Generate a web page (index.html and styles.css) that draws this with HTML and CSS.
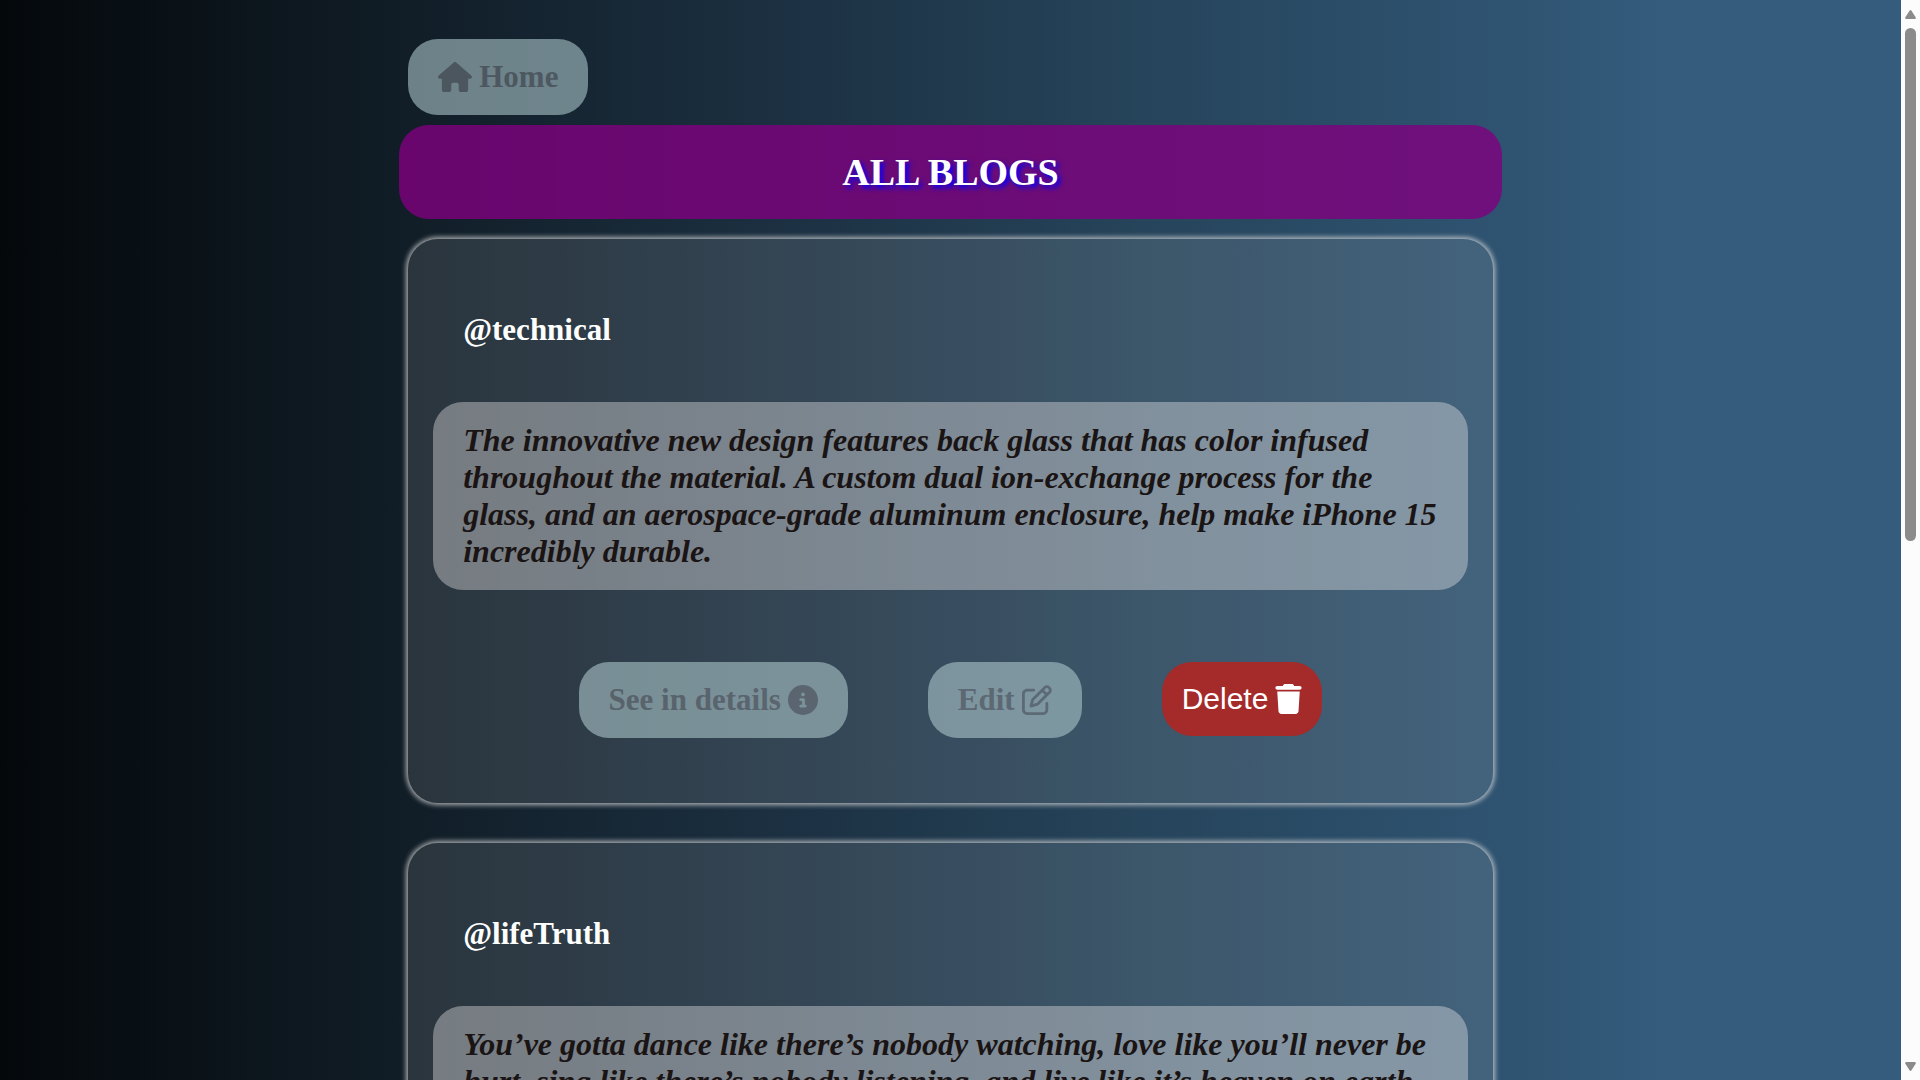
FILE: index.html
```html
<!DOCTYPE html>
<html lang="en">
<head>
<meta charset="utf-8">
<meta name="viewport" content="width=device-width, initial-scale=1">
<title>All Blogs</title>
<link rel="stylesheet" href="styles.css">
</head>
<body>
<svg class="sprite" aria-hidden="true">
  <symbol id="house" viewBox="0 0 576 512"><path d="M575.8 255.5c0 18-15 32.1-32 32.1h-32l.7 160.2c0 2.7-.2 5.4-.5 8.1V472c0 22.1-17.9 40-40 40H456c-1.1 0-2.2 0-3.3-.1c-1.4 .1-2.8 .1-4.2 .1H416 392c-22.1 0-40-17.9-40-40V448 384c0-17.7-14.3-32-32-32H256c-17.7 0-32 14.3-32 32v64 24c0 22.1-17.9 40-40 40H160 128.1c-1.5 0-3-.1-4.5-.2c-1.2 .1-2.4 .2-3.6 .2H104c-22.1 0-40-17.9-40-40V360c0-.9 0-1.9 .1-2.8V287.6H32c-18 0-32-14-32-32.1c0-9 3-17 10-24L266.4 8c7-7 15-8 22-8s15 2 21 7L564.8 231.5c8 7 12 15 11 24z"/></symbol>
  <symbol id="info" viewBox="0 0 512 512"><path d="M256 512A256 256 0 1 0 256 0a256 256 0 1 0 0 512zM216 336h24V272H216c-13.3 0-24-10.7-24-24s10.7-24 24-24h48c13.3 0 24 10.7 24 24v88h8c13.3 0 24 10.7 24 24s-10.7 24-24 24H216c-13.3 0-24-10.7-24-24s10.7-24 24-24zm40-208a32 32 0 1 1 0 64 32 32 0 1 1 0-64z"/></symbol>
  <symbol id="pen" viewBox="0 0 512 512"><path d="M441 58.9L453.1 71c9.4 9.4 9.4 24.6 0 33.9L424 134.1 377.9 88 407 58.9c9.4-9.4 24.6-9.4 33.9 0zM209.8 256.2L344 121.9 390.1 168 255.8 302.2c-2.9 2.9-6.5 5-10.4 6.1l-58.5 16.7 16.7-58.5c1.1-3.9 3.2-7.5 6.1-10.4zM373.1 25L175.8 222.2c-8.7 8.7-15 19.4-18.3 31.1l-28.6 100c-2.4 8.4-.1 17.4 6.1 23.6s15.2 8.5 23.6 6.1l100-28.6c11.8-3.4 22.5-9.7 31.1-18.3L487 138.9c28.1-28.1 28.1-73.7 0-101.8L474.9 25C446.8-3.1 401.2-3.1 373.1 25zM88 64C39.4 64 0 103.4 0 152V424c0 48.6 39.4 88 88 88H360c48.6 0 88-39.4 88-88V312c0-13.3-10.7-24-24-24s-24 10.7-24 24V424c0 22.1-17.9 40-40 40H88c-22.1 0-40-17.9-40-40V152c0-22.1 17.9-40 40-40H200c13.3 0 24-10.7 24-24s-10.7-24-24-24H88z"/></symbol>
  <symbol id="trash" viewBox="0 0 448 512"><path d="M135.2 17.7L128 32H32C14.3 32 0 46.3 0 64S14.3 96 32 96H416c17.7 0 32-14.3 32-32s-14.3-32-32-32H320l-7.2-14.3C307.4 6.8 296.3 0 284.2 0H163.8c-12.1 0-23.2 6.8-28.6 17.7zM416 128H32L53.2 467c1.6 25.3 22.6 45 47.9 45H346.9c25.3 0 46.3-19.7 47.9-45L416 128z"/></symbol>
</svg>
<main class="page">
  <div class="content">
    <nav class="nav"><a class="link" href="#home"><svg class="icon icon-wide"><use href="#house"/></svg>Home</a></nav>
    <h1 class="title">ALL BLOGS</h1>
    <article class="card">
      <h2 class="user">@technical</h2>
      <p class="text">The innovative new design features back glass that has color infused throughout the material. A custom dual ion-exchange process for the glass, and an aerospace-grade aluminum enclosure, help make iPhone 15 incredibly durable.</p>
      <div class="actions">
        <a class="link" href="#details">See in details<svg class="icon"><use href="#info"/></svg></a>
        <a class="link" href="#edit">Edit<svg class="icon"><use href="#pen"/></svg></a>
        <button class="delete" type="button">Delete<svg class="icon icon-slim"><use href="#trash"/></svg></button>
      </div>
    </article>
    <article class="card">
      <h2 class="user">@lifeTruth</h2>
      <p class="text">You’ve gotta dance like there’s nobody watching, love like you’ll never be hurt, sing like there’s nobody listening, and live like it’s heaven on earth.</p>
      <div class="actions">
        <a class="link" href="#details">See in details<svg class="icon"><use href="#info"/></svg></a>
        <a class="link" href="#edit">Edit<svg class="icon"><use href="#pen"/></svg></a>
        <button class="delete" type="button">Delete<svg class="icon icon-slim"><use href="#trash"/></svg></button>
      </div>
    </article>
  </div>
</main>
<div class="scrollbar" aria-hidden="true">
  <svg class="arrow" viewBox="0 0 11 9"><path d="M5.5 0Q6 0 6.500 .8L10.800 7.500Q11 9 10 9H1Q0 9 .2 7.500L4.500 .8Q5 0 5.500 0Z"/></svg>
  <div class="track"><div class="thumb"></div></div>
  <svg class="arrow" viewBox="0 0 11 9"><path d="M5.5 9Q6 9 6.500 8.200L10.800 1.500Q11 0 10 0H1Q0 0 .2 1.500L4.500 8.200Q5 9 5.500 9Z"/></svg>
</div>
</body>
</html>
```
FILE: styles.css
```css
* { box-sizing: border-box; }

body {
  display: flex;
  height: 100vh;
  margin: 0;
  overflow: hidden;
  font-family: "Liberation Serif", "Times New Roman", serif;
}

.sprite { display: none; }

.page {
  flex: 1;
  overflow: hidden;
  background: linear-gradient(to right, #04080b 0%, #101c25 20%, #1b2f40 40%, #26445b 60%, #2f5472 80%, #355c7d 88%);
}

.content {
  width: 58%;
  margin: 0 auto;
  padding-top: 39px;
}

.nav { display: flex; padding: 0 9px; }

.link, .delete {
  display: inline-flex;
  align-items: center;
  gap: 7px;
  border-radius: 30px;
  font-size: 30px;
  line-height: 34px;
}

.link {
  padding: 21px 30px;
  background: #abc5c9;
  color: #747b81;
  font-size: 31px;
  font-weight: bold;
  text-decoration: none;
  opacity: 0.6;
}

.delete {
  padding: 20px;
  border: 0;
  background: brown;
  color: white;
  font-family: "Liberation Sans", Arial, sans-serif;
}

.icon { width: 30px; height: 30px; fill: currentColor; }
.icon-wide { width: 34px; }
.icon-slim { width: 27px; }

.title {
  margin: 10px 0 20px;
  padding: 24px;
  border-radius: 30px;
  background: rgba(128, 0, 128, 0.8);
  color: white;
  font-size: 38px;
  line-height: 46px;
  text-align: center;
  text-shadow: 3px 3px 5px blue;
}

.card {
  margin: 0 9px 40px;
  padding: 72px 25px 65px;
  border-radius: 30px;
  background: rgba(200, 200, 200, 0.14);
  box-shadow: 0 0 5px 2px rgba(220, 220, 220, 0.75);
}

.user {
  margin: 0;
  padding: 0 30px;
  color: white;
  font-size: 31px;
  line-height: 37px;
}

.text {
  margin: 54px 0 72px;
  padding: 20px 30px;
  border-radius: 30px;
  background: rgba(243, 240, 240, 0.38);
  color: #1a1414;
  font-size: 32px;
  font-style: italic;
  font-weight: bold;
  line-height: 37px;
}

.actions {
  display: flex;
  justify-content: center;
  align-items: flex-start;
  gap: 80px;
}

.scrollbar {
  display: flex;
  flex-direction: column;
  gap: 9px;
  width: 19px;
  padding: 10px 4px 9px;
  background: #fcfcfc;
}

.arrow { flex: none; width: 11px; height: 9px; fill: #8b8b8b; }
.track { flex: 1; }
.thumb { height: 50%; border-radius: 6px; background: #8b8b8b; }
```
